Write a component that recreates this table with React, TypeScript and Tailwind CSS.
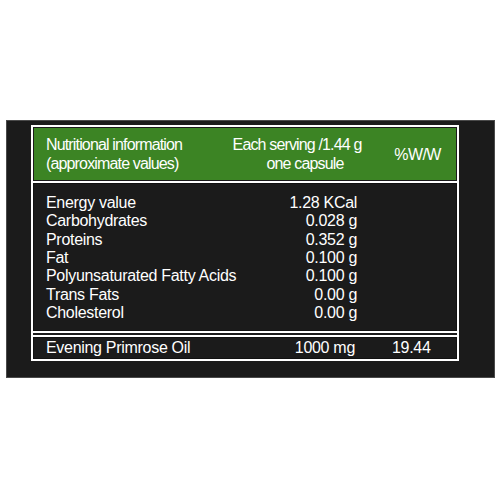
import React from 'react';

type Row = { name: string; value: string };

const rows: Row[] = [
  { name: 'Energy value', value: '1.28 KCal' },
  { name: 'Carbohydrates', value: '0.028 g' },
  { name: 'Proteins', value: '0.352 g' },
  { name: 'Fat', value: '0.100 g' },
  { name: 'Polyunsaturated Fatty Acids', value: '0.100 g' },
  { name: 'Trans Fats', value: '0.00 g' },
  { name: 'Cholesterol', value: '0.00 g' },
];

const font = { fontFamily: '"Liberation Sans", Arial, sans-serif' };

export default function App() {
  return (
    <div className="w-[500px] h-[500px] bg-white pt-[120px] pl-[6px]" style={font}>
      {/* ====== Dark panel ====== */}
      <div className="w-[489px] h-[258px] bg-[#1b1b1b] border border-[#4a4a4a] pl-[24px] pt-[4px]">
        {/* ====== Table box ====== */}
        <div className="w-[428px] border-2 border-white bg-white flex flex-col gap-[2px] text-white">
          {/* ====== Header ====== */}
          <div className="border border-[#1b1b1b] bg-[#3c8424] h-[54px] flex items-center pl-[12px] text-[16px] leading-[19px] tracking-[-0.85px]">
            <div className="w-[185px]">
              <div>Nutritional information</div>
              <div>(approximate values)</div>
            </div>
            <div className="w-[132px] text-center">
              <div>Each serving /1.44 g</div>
              <div className="pl-[16px]">one capsule</div>
            </div>
            <div className="flex-1 text-center pl-[16px] tracking-[-0.6px]">%W/W</div>
          </div>

          {/* ====== Nutrient rows ====== */}
          <div className="border border-[#111] bg-[#1b1b1b] h-[148px] pl-[12px] pt-[10px] text-[16px] leading-[18.33px] tracking-[-0.3px]">
            {rows.map((row) => (
              <div key={row.name} className="flex">
                <div className="w-[200px]">{row.name}</div>
                <div className="w-[111px] text-right">{row.value}</div>
              </div>
            ))}
          </div>

          {/* ====== Double rule ====== */}
          <div className="h-[2px] bg-[#1b1b1b]" />

          {/* ====== Evening Primrose Oil ====== */}
          <div className="border border-[#111] bg-[#1b1b1b] h-[22px] flex items-center pl-[12px] text-[16px] tracking-[-0.3px]">
            <div className="w-[200px]">Evening Primrose Oil</div>
            <div className="w-[109px] text-right">1000 mg</div>
            <div className="pl-[37px]">19.44</div>
          </div>
        </div>
      </div>
    </div>
  );
}
